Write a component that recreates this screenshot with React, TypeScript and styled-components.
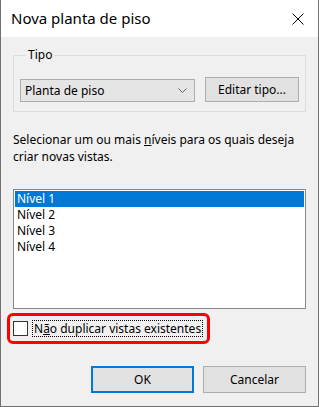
import styled, { createGlobalStyle } from 'styled-components'

const GlobalStyle = createGlobalStyle`
  html, body {
    margin: 0;
    padding: 0;
    background: #f0f0f0;
  }
  * {
    box-sizing: border-box;
  }
`

const FONT = `'Segoe UI', 'Noto Sans', 'Liberation Sans', sans-serif`

const levels = ['Nível 1', 'Nível 2', 'Nível 3', 'Nível 4']

export default function App() {
  return (
    <>
      <GlobalStyle />
      <Window>
        <TitleBar>
          <Title>Nova planta de piso</Title>
          <CloseBtn aria-label="Fechar">
            <svg width="12" height="12" viewBox="0 0 12 12">
              <path d="M0.5 0.5 L11.5 11.5 M11.5 0.5 L0.5 11.5" stroke="#000" strokeWidth="1" />
            </svg>
          </CloseBtn>
        </TitleBar>
        <Body>
          <GroupBox>
            <Legend>Tipo</Legend>
            <TypeRow>
              <Select>
                <span>Planta de piso</span>
                <svg width="9" height="5" viewBox="0 0 9 5">
                  <path d="M0.5 0.5 L4.5 4.5 L8.5 0.5" stroke="#606060" strokeWidth="1" fill="none" />
                </svg>
              </Select>
              <Button>Editar tipo...</Button>
            </TypeRow>
          </GroupBox>

          <Prompt>
            Selecionar um ou mais <Key>n</Key>íveis para os quais deseja criar novas vistas.
          </Prompt>

          <ListBox>
            {levels.map((l, i) => (
              <ListItem key={l} selected={i === 0}>
                {l}
              </ListItem>
            ))}
          </ListBox>

          <Highlight>
            <CheckBox />
            <CheckLabel>
              N<Key>ã</Key>o duplicar vistas existentes
            </CheckLabel>
          </Highlight>

          <Footer>
            <Button primary width={103} height={27}>
              OK
            </Button>
            <Button width={103} height={27}>
              Cancelar
            </Button>
          </Footer>
        </Body>
      </Window>
    </>
  )
}

const Window = styled.div`
  width: 319px;
  height: 407px;
  display: flex;
  flex-direction: column;
  border: 1px solid #707070;
  border-top: none;
  background: #f0f0f0;
  font-family: ${FONT};
  font-size: 12px;
  color: #000;
  overflow: hidden;
`

const TitleBar = styled.div`
  height: 37px;
  flex: 0 0 auto;
  display: flex;
  align-items: center;
  justify-content: space-between;
  background: #fff;
  padding: 0 14px 0 10px;
`

const Title = styled.div`
  font-size: 15px;
  color: #000;
  padding-bottom: 1px;
`

const CloseBtn = styled.div`
  width: 12px;
  height: 12px;
  display: flex;
  svg {
    display: block;
  }
`

const Body = styled.div`
  flex: 1;
  display: flex;
  flex-direction: column;
  padding: 10px 12px 0 12px;
`

const GroupBox = styled.fieldset`
  margin: 0;
  border: 1px solid #dcdcdc;
  padding: 14px 5px 9px 6px;
  min-width: 0;
`

const Legend = styled.legend`
  padding: 0 2px;
  margin-left: 6px;
  line-height: 16px;
`

const TypeRow = styled.div`
  display: flex;
  align-items: flex-end;
  gap: 10px;
`

const Select = styled.div`
  width: 175px;
  height: 23px;
  display: flex;
  align-items: center;
  justify-content: space-between;
  padding: 0 7px 0 4px;
  background: #e5e5e5;
  border: 1px solid #adadad;
  svg {
    display: block;
  }
`

const Button = styled.div<{ primary?: boolean; width?: number; height?: number }>`
  width: ${p => p.width ?? 94}px;
  height: ${p => p.height ?? 25}px;
  display: flex;
  align-items: center;
  justify-content: center;
  background: #e1e1e1;
  border: ${p => (p.primary ? '2px solid #0078d7' : '1px solid #adadad')};
`

const Key = styled.span`
  text-decoration: underline;
`

const Prompt = styled.p`
  margin: 19px 0 0 0;
  line-height: 17px;
  padding-right: 2px;
`

const ListBox = styled.div`
  margin-top: 24px;
  height: 120px;
  background: #fff;
  border: 1px solid #828790;
  padding: 1px;
`

const ListItem = styled.div<{ selected?: boolean }>`
  height: 16px;
  line-height: 16px;
  padding-left: 2px;
  background: ${p => (p.selected ? '#0078d7' : 'transparent')};
  color: ${p => (p.selected ? '#fff' : '#000')};
`

const Highlight = styled.div`
  align-self: flex-start;
  margin: 4px 0 0 -6px;
  display: flex;
  align-items: center;
  gap: 4px;
  padding: 4px 4px 4px 3px;
  border: 3px solid #ff0000;
  border-radius: 6px;
`

const CheckBox = styled.div`
  width: 15px;
  height: 15px;
  background: #fff;
  border: 1px solid #333;
`

const CheckLabel = styled.span`
  border: 1px dotted #000;
  padding: 0 1px;
  line-height: 15px;
`

const Footer = styled.div`
  margin-top: 22px;
  display: flex;
  justify-content: flex-end;
  gap: 9px;
`
